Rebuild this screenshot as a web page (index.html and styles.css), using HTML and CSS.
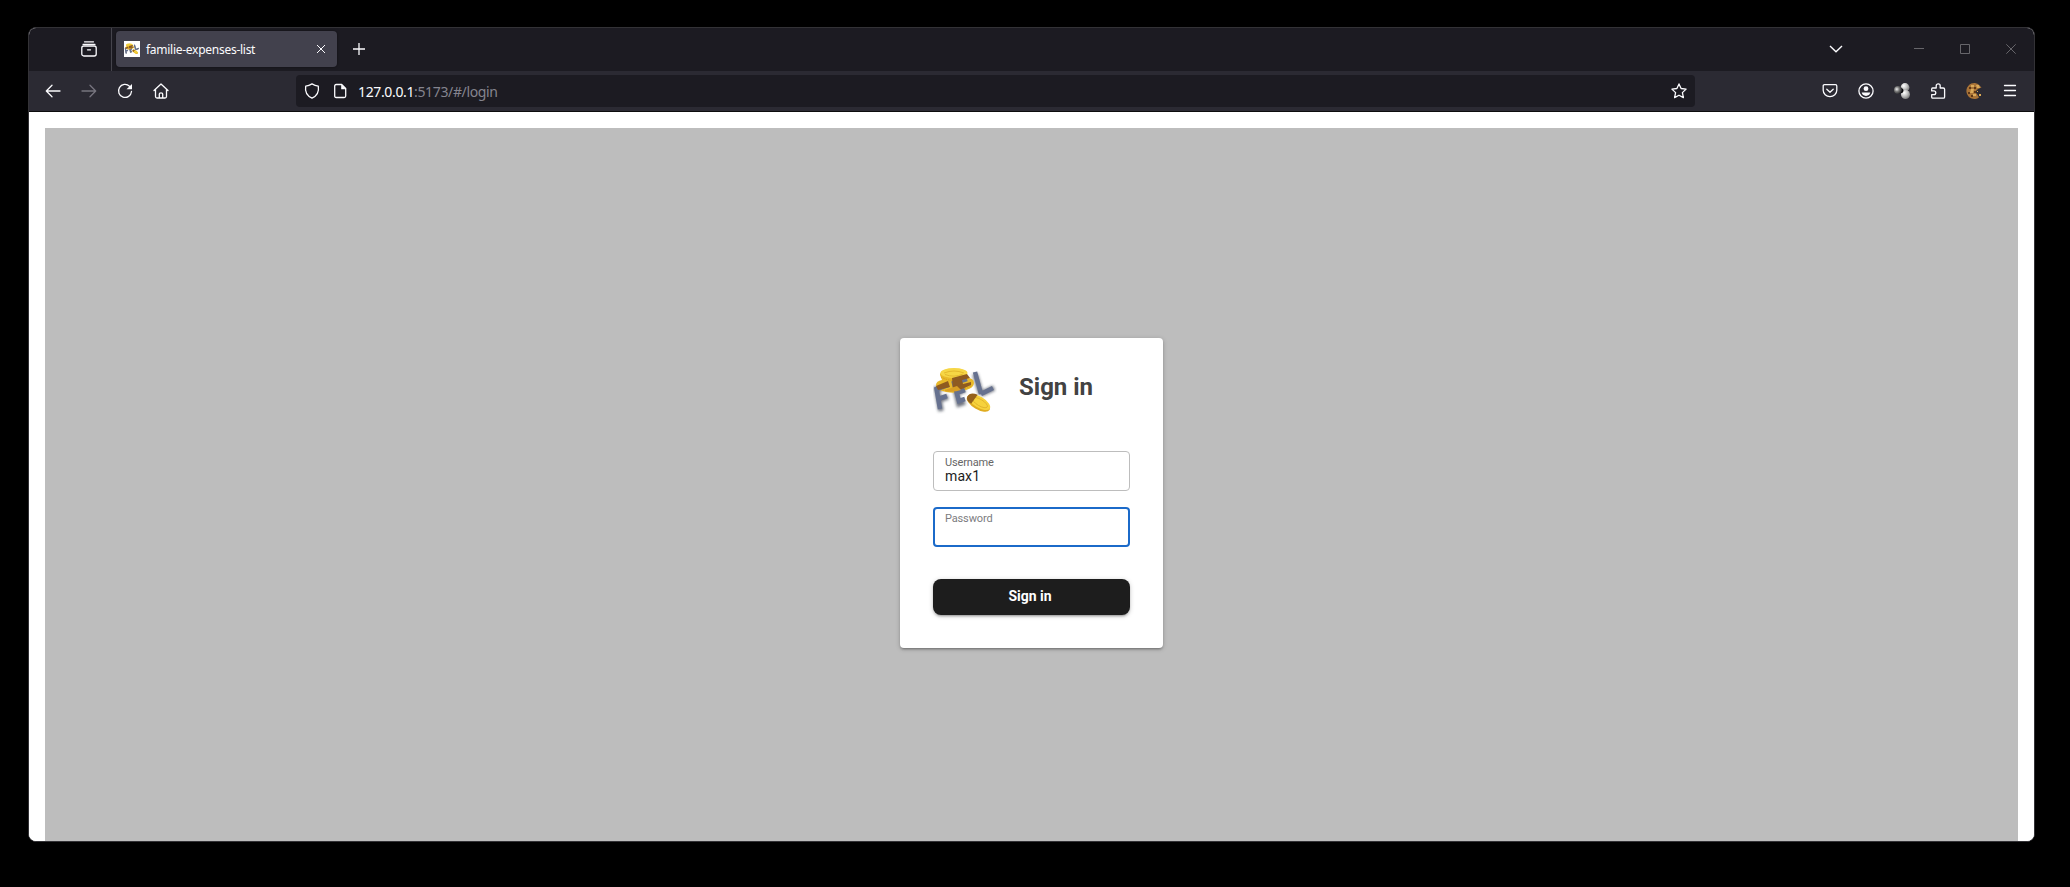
FILE: index.html
```html
<!DOCTYPE html>
<html lang="en">
<head>
<meta charset="utf-8">
<title>familie-expenses-list</title>
<link rel="stylesheet" href="styles.css">
</head>
<body>
<svg width="0" height="0" class="defs" aria-hidden="true">
  <defs>
    <filter id="soft" x="-30%" y="-30%" width="160%" height="160%"><feGaussianBlur stdDeviation="1.8"/></filter>
    <radialGradient id="ball" cx=".35" cy=".3" r=".75"><stop offset="0" stop-color="#fff"/><stop offset=".5" stop-color="#c4c4c4"/><stop offset="1" stop-color="#777"/></radialGradient>
    <radialGradient id="ballDark" cx=".35" cy=".4" r=".7"><stop offset="0" stop-color="#eee"/><stop offset=".45" stop-color="#777"/><stop offset="1" stop-color="#18181c"/></radialGradient>
    <symbol id="fel" viewBox="0 0 64 50">
      <g class="letters-shadow" filter="url(#soft)">
        <path d="M8 45 4 23 15 20M6 34l9-3M32 36l-6 2-5-21 13-4M23 27l9-3M48 28 42 8M48 28l13-6"/>
      </g>
      <path fill="#e9b92a" d="M7 9Q7 3 21 3T34 8V12Q41 12 41 17T33 24Q24 28 13 26Q3 24 3 19 3 15 9 14Z"/>
      <ellipse cx="21" cy="7" rx="13.500" ry="5" fill="#f6d645"/>
      <path d="M11 7Q21 3 31 7M12 8.500Q21 12 30 8" stroke="#e2b42a" stroke-width=".9" fill="none"/>
      <path d="M8 11Q20 18 34 10M5 22Q20 29 38 20" stroke="#d9a11c" stroke-dasharray="1.500 1" fill="none"/>
      <g class="letters">
        <path d="M7 43 3.500 23 15 19M5 33l9-3M32 33l-6 2-5-18 13-4M23 27l9-3M48 28 42 6M48 28l12-6"/>
      </g>
      <path fill="#8f5a20" d="M3 20 15 15 17 21 5 24ZM19 12 34 8 37 12 29 14 30 18 38 16 38 19 29 23 20 24Z"/>
      <path d="M12 24 24 20 28 24Q20 27 12 25Z" fill="#d99e24"/>
      <g transform="rotate(31 45 36)">
        <ellipse cx="46" cy="37" rx="13" ry="6" fill="#e0ac20"/>
        <ellipse cx="46" cy="35.500" rx="12.500" ry="5.500" fill="#f6d23c"/>
        <ellipse cx="47" cy="35.500" rx="8.500" ry="3.200" fill="none" stroke="#dfb02a" stroke-width=".8"/>
        <path d="M33 37Q33 31 41 30L40 41Q34 41 33 37Z" fill="#94601b"/>
      </g>
    </symbol>
  </defs>
</svg>

<div class="window">
  <div class="tabbar">
    <div class="archive"><svg class="ic" viewBox="0 0 16 16"><path d="M3.500.8h9M2 3.300h12"/><rect x=".8" y="5" width="14.400" height="10" rx="2"/><path d="M6.500 8.800h3"/></svg></div>
    <div class="tab">
      <svg class="favicon" viewBox="-2 -7 68 64"><use href="#fel" width="64" height="50"/></svg>
      <span class="tab-title">familie-expenses-list</span>
      <svg class="tab-close" viewBox="0 0 10 10"><path d="m1 1 8 8M9 1 1 9"/></svg>
    </div>
    <svg class="plus" viewBox="0 0 12 12"><path d="M6 0v12M0 6h12"/></svg>
    <div class="controls">
      <svg class="chev" viewBox="0 0 14 8"><path d="m1 1 6 5.700L13 1"/></svg>
      <svg class="wc" viewBox="0 0 10 10"><path d="M0 4.500h10"/></svg>
      <svg class="wc" viewBox="0 0 10 10"><path d="M.5.5h9v9h-9z"/></svg>
      <svg class="wc" viewBox="0 0 10 10"><path d="m.3.3 9.400 9.400M9.700.3.3 9.700"/></svg>
    </div>
  </div>

  <div class="navbar">
    <div class="nav-buttons">
      <svg class="ic" viewBox="0 0 16 16"><path d="M15 8H1.500M7 2.300 1.300 8 7 13.700"/></svg>
      <svg class="ic dim" viewBox="0 0 16 16"><path d="M1 8h13.500M9 2.300 14.700 8 9 13.700"/></svg>
      <svg class="ic" viewBox="0 0 16 16"><path d="M12.500 3.200A6.500 6.500 0 1 0 14.500 8.500"/><path class="solid" d="M15 1v5.200H9.500Z"/></svg>
      <svg class="ic" viewBox="0 0 16 16"><path d="M1 7.500 8 1l7 6.500M2.500 6.500v7q0 1.500 1.500 1.500h8q1.500 0 1.500-1.500v-7M6.300 15v-4q0-1.200 1.700-1.200T9.700 11v4"/></svg>
    </div>
    <div class="urlbar">
      <svg class="ic" viewBox="0 0 16 16"><path d="M8 .9Q5 2.700 1.700 3.100C.8 8.500 3.500 13 8 15.200c4.500-2.200 7.200-6.700 6.300-12.100Q11 2.700 8 .9Z"/></svg>
      <svg class="ic" viewBox="0 0 16 16"><path d="M4.200 1.500h5.500l4 4v7.500q0 1.500-1.500 1.500h-8q-1.500 0-1.500-1.500V3q0-1.500 1.500-1.500Z"/><path class="solid" d="M9.200 1.500v4.800h4.700Z"/></svg>
      <span class="url"><b>127.0.0.1</b>:5173/#/login</span>
      <svg class="ic star" viewBox="0 0 16 16"><path d="m8 .9 2.100 4.600 5 .6-3.700 3.500 1 5L8 12.200l-4.400 2.400 1-5L.9 6.100l5-.6Z"/></svg>
    </div>
    <div class="extensions">
      <svg class="ic" viewBox="0 0 16 16"><path d="M2.500 1.700h11q1.300 0 1.300 1.300v4.300a6.800 6.300 0 0 1-13.600 0V3q0-1.300 1.300-1.300ZM4.800 6.200 8 9.200l3.200-3"/></svg>
      <svg class="ic" viewBox="0 0 16 16"><circle cx="8" cy="8" r="7.100"/><circle class="solid" cx="8" cy="5.700" r="2.400"/><path class="solid" d="M3.700 9.600h8.600q-.8 3.300-4.300 3.300T3.700 9.600Z"/></svg>
      <svg class="pic" viewBox="0 0 16 16"><circle cx="11" cy="4.500" r="4.400" fill="url(#ball)"/><circle cx="11.500" cy="11.500" r="4.500" fill="url(#ball)"/><circle cx="6.800" cy="7.500" r="2.600" fill="#08080c"/><circle cx="4" cy="7" r="4" fill="url(#ballDark)"/></svg>
      <svg class="ic" viewBox="0 0 16 16"><path d="M2.500 5h3.700V2.800a2 2 0 0 1 4 0V5h3q1.400 0 1.400 1.200V14q0 1.200-1.200 1.200H3Q1.700 15.200 1.700 14v-2.300h2.200a1.900 1.900 0 0 0 0-3.800H1.700V6.200Q1.700 5 2.500 5Z"/></svg>
      <svg class="pic" viewBox="0 0 16 16"><path fill="#a97337" d="M9 0A8 8 0 1 0 13 14.500L11 11 9 9l3-3 3.500-1.500L12 1Z"/><path fill="#d9a95a" d="M5 2h3v2H5zM10 2h3l1 3h-3zM5 6h3l-1 4H4zM7 11h3v2H7z"/><path fill="#5d3717" d="M3 4h2v2H3zM8 4h2v2H8zM2 9h2v2H2zM5 12h2v2H5zM8 8h2v2H8z"/><path fill="#dfab55" d="M11 8h1v1h-1zM13 11h2v2h-2z"/></svg>
      <svg class="ic" viewBox="0 0 16 16"><path d="M2.500 2.500h11M2.500 7.500h11M2.500 12.500h11"/></svg>
    </div>
  </div>

  <main class="page">
    <div class="backdrop">
      <form class="card">
        <div class="head">
          <svg class="logo" viewBox="0 0 64 50"><use href="#fel"/></svg>
          <h1>Sign in</h1>
        </div>
        <div class="field"><span class="label">Username</span><span class="value">max1</span></div>
        <div class="field focused"><span class="label">Password</span></div>
        <button type="button" class="submit">Sign in</button>
      </form>
    </div>
  </main>
</div>
</body>
</html>
```
FILE: styles.css
```css
* { box-sizing: border-box; }
html, body { height: 100%; }
body {
  margin: 0;
  padding: 27px 35px 45px 28px;
  background: #000;
  font-family: Roboto, sans-serif;
  overflow: hidden;
}
.defs { position: absolute; }
svg { display: block; flex: none; overflow: visible; }

.window {
  height: 815px;
  border: 1px solid #333236;
  border-radius: 8px;
  overflow: hidden;
  display: flex;
  flex-direction: column;
  background: #fff;
}

.ic { width: 16px; height: 16px; fill: none; stroke: #fbfbfe; stroke-width: 1.3; stroke-linecap: round; stroke-linejoin: round; }
.ic .solid { fill: #fbfbfe; stroke: none; }
.ic.dim { stroke: #77757f; }
.pic { width: 16px; height: 16px; }

.tabbar { height: 43px; padding-bottom: 1px; background: #1c1b22; display: flex; align-items: center; flex: none; }
.archive { width: 83px; height: 43px; border-right: 1px solid #45444c; display: flex; align-items: center; padding-left: 52px; }
.tab {
  width: 221px; height: 36px; margin-left: 4px;
  border-radius: 4px; background: #42414d;
  box-shadow: 0 0 3px rgba(0, 0, 0, .5);
  display: flex; align-items: center; padding: 0 11px 0 8px;
}
.favicon { width: 16px; height: 16px; background: #fff; overflow: hidden; }
.tab-title { margin-left: 6px; padding-top: 1px; font: 12px/16px "Noto Sans", sans-serif; letter-spacing: -.27px; color: #fbfbfe; white-space: nowrap; }
.tab-close { width: 10px; height: 10px; margin-left: auto; stroke: #fbfbfe; stroke-width: 1; }
.plus { width: 12px; height: 12px; margin-left: 15.5px; stroke: #fbfbfe; stroke-width: 1.3; }
.controls { margin-left: auto; padding-right: 18px; display: flex; align-items: center; gap: 36px; }
.chev { width: 14px; height: 8px; margin-right: 35px; fill: none; stroke: #fbfbfe; stroke-width: 1.4; }
.wc { width: 10px; height: 10px; fill: none; stroke: #67666b; stroke-width: 1; }

.navbar { height: 41px; background: #2b2a33; border-bottom: 1px solid #0c0c0d; display: flex; align-items: center; flex: none; }
.nav-buttons { width: 267px; display: flex; gap: 20px; padding-left: 16px; }
.urlbar { width: 1399px; height: 32px; border-radius: 4px; background: #1c1b22; display: flex; align-items: center; padding: 0 8px; }
.urlbar .ic + .ic { margin-left: 12px; }
.url { margin-left: 10px; padding-top: 2px; font: 14px/20px "Noto Sans", sans-serif; letter-spacing: -.36px; color: #85848f; white-space: nowrap; }
.url b { font-weight: 400; color: #fbfbfe; }
.urlbar .star { margin-left: auto; }
.extensions { margin-left: auto; padding-right: 16px; display: flex; gap: 20px; }

.page { flex: 1; padding: 16px 16px 0; background: #fff; }
.backdrop { height: 100%; background: #bdbdbd; padding: 210px 0 0 855px; }
.card {
  width: 263px; height: 310px; padding: 28px 33px 33px;
  background: #fff; border-radius: 4px;
  box-shadow: 0 1px 5px rgba(0, 0, 0, .2), 0 2px 2px rgba(0, 0, 0, .14), 0 3px 1px -2px rgba(0, 0, 0, .12);
}
.head { display: flex; height: 50px; margin-bottom: 35px; }
.logo { width: 64px; height: 50px; }
.letters { fill: none; stroke: #66718f; stroke-width: 4.5; }
.letters-shadow { fill: none; stroke: #303848; stroke-width: 5.5; opacity: .7; }
.card h1 { margin: 7px 0 0 22px; font-size: 24px; line-height: 28px; font-weight: 700; letter-spacing: 0; color: #424242; white-space: nowrap; }
.field { height: 40px; border: 1px solid #bdbdbd; border-radius: 4px; margin-bottom: 16px; padding: 4px 11px; display: flex; flex-direction: column; }
.label { font-size: 11px; line-height: 13px; letter-spacing: -.14px; color: #666; }
.value { font-size: 14px; line-height: 14px; letter-spacing: .1px; color: #1d1d1d; }
.field.focused { border: 2px solid #1b6ac9; padding: 3px 10px; }
.focused .label { color: #7c7c80; }
.submit {
  display: block; width: 197px; height: 36px; margin-top: 32px; padding: 0 3px 2px 0;
  border: 0; border-radius: 8px; background: #1d1d1d; color: #fff;
  font: 700 14px/34px Roboto, sans-serif;
  box-shadow: 0 1px 5px rgba(0, 0, 0, .2), 0 2px 2px rgba(0, 0, 0, .14), 0 3px 1px -2px rgba(0, 0, 0, .12);
}
```
